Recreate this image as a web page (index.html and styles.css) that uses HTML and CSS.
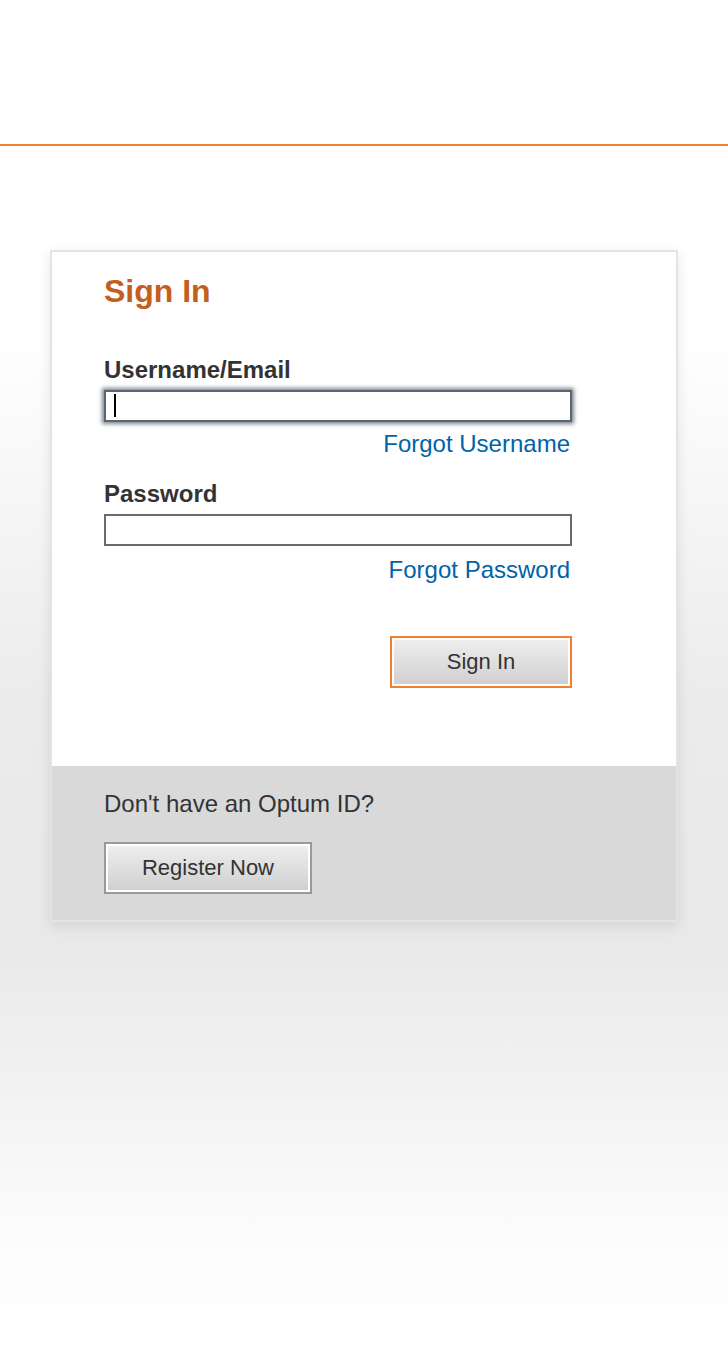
FILE: index.html
```html
<!DOCTYPE html>
<html lang="en">
<head>
<meta charset="utf-8">
<title>Sign In</title>
<link rel="stylesheet" href="styles.css">
</head>
<body>
<header class="topbar"></header>
<main class="stage">
  <section class="card">
    <div class="card-main">
      <h1 class="title">Sign In</h1>
      <form class="form">
        <label class="label" for="user">Username/Email</label>
        <div class="field">
          <input class="input input-focus" id="user" type="text">
          <span class="caret"></span>
        </div>
        <a class="link" href="#">Forgot Username</a>
        <label class="label label-pw" for="pw">Password</label>
        <input class="input" id="pw" type="password">
        <a class="link link-pw" href="#">Forgot Password</a>
        <div class="actions">
          <button class="btn btn-primary" type="button">Sign In</button>
        </div>
      </form>
    </div>
    <div class="card-foot">
      <p class="foot-text">Don't have an Optum ID?</p>
      <button class="btn btn-secondary" type="button">Register Now</button>
    </div>
  </section>
</main>
</body>
</html>
```
FILE: styles.css
```css
* { box-sizing: border-box; }
html, body { margin: 0; padding: 0; }
body {
  font-family: "Liberation Sans", Arial, sans-serif;
  color: #333;
  background: #fff;
  min-height: 1350px;
}
.topbar {
  height: 146px;
  border-bottom: 2px solid #f07f2f;
  background: #fff;
}
.stage {
  min-height: 1204px;
  padding: 104px 0 0 50px;
  background: linear-gradient(#fff 0px, #fff 190px, #ebebeb 560px, #e9e9e9 800px, #fdfdfd 1110px, #fff 1204px);
}
.card {
  width: 628px;
  border: 2px solid #e4e4e4;
  background: #fff;
  box-shadow: 0 6px 14px rgba(0,0,0,0.07), 0 0 10px rgba(0,0,0,0.04);
}
.card-main {
  padding: 19px 52px 78px 52px;
}
.title {
  margin: 0;
  font-size: 32px;
  line-height: 40px;
  font-weight: bold;
  color: #c45e1f;
}
.form {
  width: 468px;
  display: flex;
  flex-direction: column;
  margin-top: 45px;
}
.label {
  font-size: 24px;
  line-height: 28px;
  font-weight: bold;
  color: #333;
  margin-bottom: 6px;
}
.label-pw { margin-top: 22px; }
.field { position: relative; }
.input {
  display: block;
  width: 468px;
  height: 32px;
  margin: 0;
  border: 2px solid #6a6a6a;
  background: #fff;
  padding: 0 8px;
  font: inherit;
  outline: none;
}
.input-focus {
  border-color: #5b6570;
  box-shadow: 0 0 4px 2px rgba(70,82,95,0.7);
}
.caret {
  position: absolute;
  left: 10px;
  top: 4px;
  width: 2px;
  height: 23px;
  background: #000;
}
.link {
  align-self: flex-end;
  font-size: 24px;
  line-height: 28px;
  color: #0063a8;
  text-decoration: none;
  margin-top: 8px;
  margin-right: 2px;
}
.link-pw { margin-top: 10px; }
.actions {
  display: flex;
  justify-content: flex-end;
  margin-top: 52px;
}
.btn {
  height: 52px;
  font-family: "Liberation Sans", Arial, sans-serif;
  font-size: 22px;
  color: #333;
  background: linear-gradient(#efefef, #cfcfcf);
  padding: 0;
  display: flex;
  align-items: center;
  justify-content: center;
  cursor: pointer;
}
.btn-primary {
  width: 182px;
  border: 2px solid #f07f2f;
  box-shadow: inset 0 0 0 2px #fff;
}
.btn-secondary {
  width: 208px;
  border: 2px solid #9a9a9a;
  box-shadow: inset 0 0 0 2px #fff;
}
.card-foot {
  background: #d9d9d9;
  padding: 24px 52px 26px 52px;
}
.foot-text {
  margin: 0 0 24px 0;
  font-size: 24px;
  line-height: 28px;
  color: #333;
}
```
